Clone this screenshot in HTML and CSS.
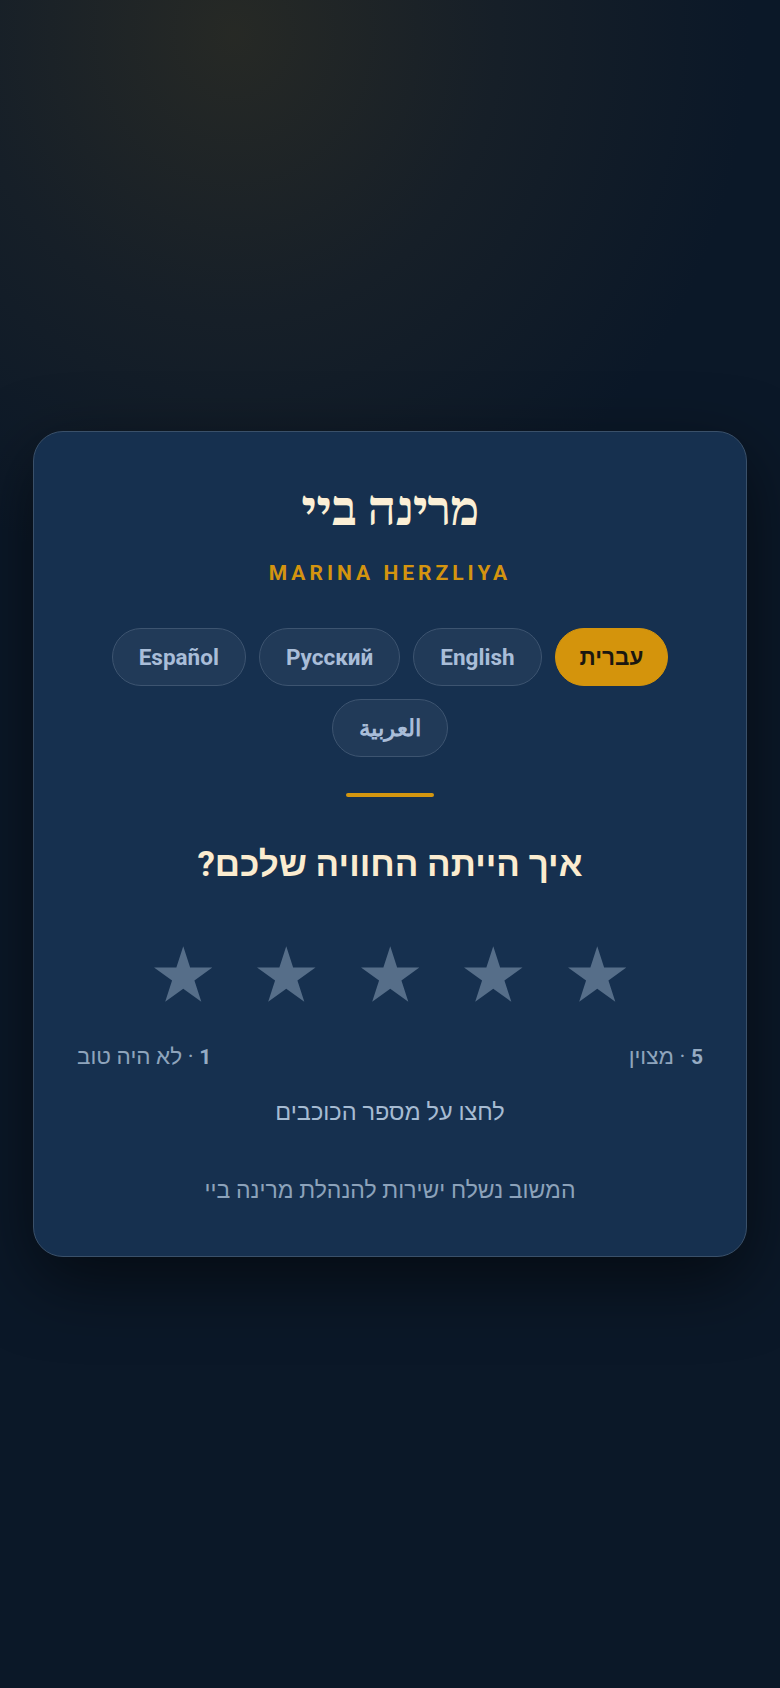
FILE: index.html
```html
<!DOCTYPE html>
<html lang="he" dir="rtl">
<head>
<meta charset="utf-8">
<title>מרינה ביי</title>
<link rel="stylesheet" href="styles.css">
</head>
<body>
<main class="page">
  <section class="card">
    <h1 class="title">מרינה ביי</h1>
    <p class="subtitle">MARINA HERZLIYA</p>
    <div class="langs">
      <button class="pill active">עברית</button>
      <button class="pill">English</button>
      <button class="pill">Русский</button>
      <button class="pill">Español</button>
      <button class="pill">العربية</button>
    </div>
    <div class="divider"></div>
    <h2 class="question">איך הייתה החוויה שלכם?</h2>
    <div class="stars">
      <svg class="star" viewBox="2.4 0 95.2 90.5"><polygon points="50,0 61.2,34.5 97.6,34.5 68.2,55.9 79.4,90.5 50,69.1 20.6,90.5 31.8,55.9 2.4,34.5 38.8,34.5"/></svg>
      <svg class="star" viewBox="2.4 0 95.2 90.5"><polygon points="50,0 61.2,34.5 97.6,34.5 68.2,55.9 79.4,90.5 50,69.1 20.6,90.5 31.8,55.9 2.4,34.5 38.8,34.5"/></svg>
      <svg class="star" viewBox="2.4 0 95.2 90.5"><polygon points="50,0 61.2,34.5 97.6,34.5 68.2,55.9 79.4,90.5 50,69.1 20.6,90.5 31.8,55.9 2.4,34.5 38.8,34.5"/></svg>
      <svg class="star" viewBox="2.4 0 95.2 90.5"><polygon points="50,0 61.2,34.5 97.6,34.5 68.2,55.9 79.4,90.5 50,69.1 20.6,90.5 31.8,55.9 2.4,34.5 38.8,34.5"/></svg>
      <svg class="star" viewBox="2.4 0 95.2 90.5"><polygon points="50,0 61.2,34.5 97.6,34.5 68.2,55.9 79.4,90.5 50,69.1 20.6,90.5 31.8,55.9 2.4,34.5 38.8,34.5"/></svg>
    </div>
    <div class="scale">
      <span class="scale-item"><b>5</b> · מצוין</span>
      <span class="scale-item"><b>1</b> · לא היה טוב</span>
    </div>
    <p class="hint">לחצו על מספר הכוכבים</p>
    <p class="footer">המשוב נשלח ישירות להנהלת מרינה ביי</p>
  </section>
</main>
</body>
</html>
```
FILE: styles.css
```css
* { box-sizing: border-box; }
html, body { margin: 0; padding: 0; }
body {
  min-height: 100vh;
  font-family: Roboto, "Liberation Sans", sans-serif;
  background:
    radial-gradient(ellipse 66% 33% at 30% 2%, rgba(40, 42, 37, 0.95) 0%, rgba(30, 36, 40, 0.6) 50%, rgba(11, 24, 40, 0) 100%),
    #0b1828;
  color: #a9bdd4;
}
.page {
  min-height: 100vh;
  display: flex;
  align-items: center;
  justify-content: center;
  padding: 0 33px;
}
.card {
  width: 100%;
  background: #16304f;
  border: 1.5px solid #3a5069;
  border-radius: 30px;
  box-shadow: 0 24px 70px rgba(0, 0, 0, 0.55);
  padding: 53px 43px 52px;
  display: flex;
  flex-direction: column;
  align-items: center;
  text-align: center;
}
.title {
  margin: 0;
  font-family: "Noto Serif Hebrew", "Liberation Serif", serif;
  font-weight: 700;
  font-size: 45px;
  line-height: 54px;
  color: #fbefd6;
}
.subtitle {
  margin: 22px 0 0;
  font-size: 21px;
  line-height: 25px;
  font-weight: 700;
  letter-spacing: 4px;
  color: #d4940f;
  direction: ltr;
}
.langs {
  margin-top: 42px;
  display: flex;
  flex-wrap: wrap;
  justify-content: center;
  gap: 13px 13px;
}
.pill {
  display: inline-flex;
  align-items: center;
  justify-content: center;
  height: 58px;
  font-family: Roboto, "Liberation Sans", sans-serif;
  font-size: 22.5px;
  line-height: 26px;
  font-weight: 700;
  padding: 0 26px;
  border-radius: 999px;
  border: 1.5px solid #3d5470;
  background: #213a58;
  color: #a9bdd8;
}
.pill.active {
  padding: 0 24px;
  background: #d4940c;
  border-color: #d4940c;
  color: #1a1710;
}
.divider {
  margin-top: 36.5px;
  width: 88px;
  height: 4px;
  border-radius: 2px;
  background: #d4960f;
}
.question {
  margin: 47px 0 0;
  font-size: 35px;
  line-height: 42px;
  font-weight: 700;
  color: #fbecd0;
}
.stars {
  margin-top: 60px;
  display: flex;
  gap: 45px;
  direction: ltr;
}
.star {
  width: 58.5px;
  height: 56px;
  fill: #566e89;
  display: block;
}
.scale {
  margin-top: 41px;
  align-self: stretch;
  display: flex;
  justify-content: space-between;
  font-size: 22.5px;
  line-height: 26px;
  color: #8ea4bc;
}
.scale-item b { font-weight: 700; font-size: 21px; color: #95abc3; }
.hint {
  margin: 28px 0 0;
  font-size: 23.5px;
  line-height: 28px;
  color: #a6bbd2;
}
.footer {
  margin: 51px 0 0;
  font-size: 23px;
  line-height: 27px;
  color: #8ca2ba;
}
```
